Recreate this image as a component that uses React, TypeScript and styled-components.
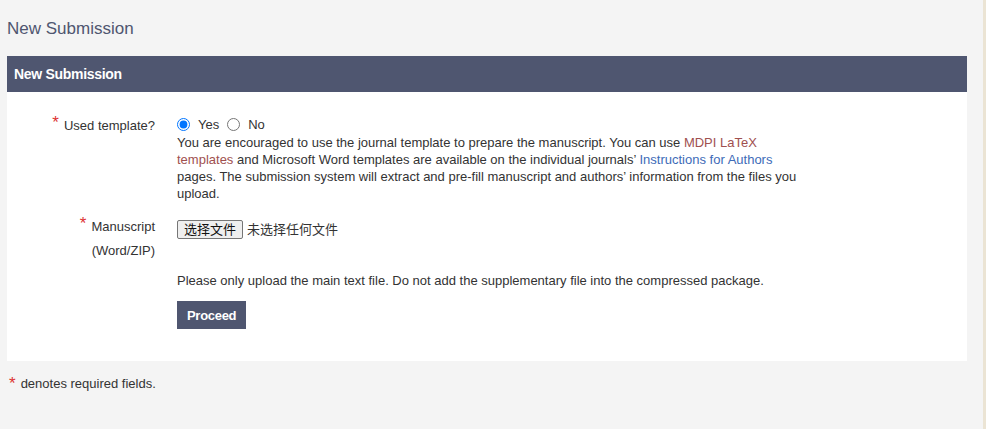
import React from "react";
import styled, { createGlobalStyle } from "styled-components";

const GlobalStyle = createGlobalStyle`
  html, body {
    margin: 0;
    padding: 0;
    background: #f4f4f4;
  }
  body {
    font-family: Arial, "Liberation Sans", "Noto Sans CJK SC", sans-serif;
    color: #222;
    border-right: 3px solid #ebe4d4;
    min-height: 429px;
    box-sizing: border-box;
  }
`;

const Page = styled.div`
  padding: 17px 16px 0 7px;
`;

const PageTitle = styled.h1`
  margin: 0 0 15px;
  font-size: 17px;
  font-weight: normal;
  color: #4f5670;
  line-height: 24px;
`;

const Panel = styled.section`
  background: #fff;
`;

const PanelHeader = styled.div`
  background: #4f5670;
  color: #fff;
  font-size: 14px;
  font-weight: bold;
  height: 36px;
  line-height: 36px;
  padding: 0 7px;
  letter-spacing: -0.3px;
`;

const PanelBody = styled.div`
  padding: 22px 0 32px;
  display: grid;
  grid-template-columns: 148px 625px;
  column-gap: 22px;
  row-gap: 13px;
`;

const Label = styled.div`
  text-align: right;
  font-size: 13px;
  line-height: 24px;
  color: #333;
`;

const Star = styled.span`
  color: #d33;
  font-size: 17px;
  vertical-align: top;
  margin-right: 5px;
  line-height: 18px;
`;

const Field = styled.div`
  font-size: 13px;
  line-height: 17px;
  color: #333;
`;

const RadioRow = styled.div`
  display: flex;
  align-items: center;
  font-size: 13px;
  height: 20px;
`;

const Radio = styled.input`
  margin: 0 8px 0 0;
  width: 13px;
  height: 13px;
`;

const RadioLabel = styled.label`
  display: flex;
  align-items: center;
  margin-right: 8px;
`;

const Link = styled.a<{ $tone: "red" | "blue" }>`
  color: ${(p) => (p.$tone === "red" ? "#a0504f" : "#3d6bb8")};
  text-decoration: none;
`;

const FileRow = styled.div`
  display: flex;
  align-items: center;
  gap: 4px;
  font-size: 13px;
  height: 24px;
  margin-top: 2px;
`;

const FileButton = styled.button`
  font-family: inherit;
  font-size: 13px;
  background: #efefef;
  border: 1px solid #767676;
  border-radius: 2px;
  padding: 0 6px;
  height: 19px;
  line-height: 17px;
  color: #111;
`;

const Note = styled.p`
  margin: 31px 0 12px;
  font-size: 13px;
  line-height: 17px;
  color: #333;
`;

const Proceed = styled.button`
  display: block;
  background: #4f5670;
  color: #fff;
  border: none;
  font-family: inherit;
  font-weight: bold;
  font-size: 13px;
  height: 28px;
  padding: 0 10px;
  letter-spacing: -0.3px;
`;

const Footer = styled.p`
  margin: 14px 0 0 2px;
  font-size: 13px;
  line-height: 18px;
  color: #333;
`;

export default function App() {
  return (
    <>
      <GlobalStyle />
      <Page>
        <PageTitle>New Submission</PageTitle>
        <Panel>
          <PanelHeader>New Submission</PanelHeader>
          <PanelBody>
            <Label>
              <Star>*</Star>Used template?
            </Label>
            <Field>
              <RadioRow>
                <RadioLabel>
                  <Radio type="radio" name="tpl" defaultChecked />
                  Yes
                </RadioLabel>
                <RadioLabel>
                  <Radio type="radio" name="tpl" />
                  No
                </RadioLabel>
              </RadioRow>
              You are encouraged to use the journal template to prepare the manuscript. You can use{" "}
              <Link $tone="red" href="#">MDPI LaTeX templates</Link> and Microsoft Word templates are
              available on the individual journals’{" "}
              <Link $tone="blue" href="#">Instructions for Authors</Link> pages. The submission system
              will extract and pre-fill manuscript and authors’ information from the files you upload.
            </Field>

            <Label>
              <Star>*</Star>Manuscript
              <br />
              (Word/ZIP)
            </Label>
            <Field>
              <FileRow>
                <FileButton type="button">选择文件</FileButton>
                <span>未选择任何文件</span>
              </FileRow>
              <Note>
                Please only upload the main text file. Do not add the supplementary file into the
                compressed package.
              </Note>
              <Proceed type="button">Proceed</Proceed>
            </Field>
          </PanelBody>
        </Panel>
        <Footer>
          <Star>*</Star>denotes required fields.
        </Footer>
      </Page>
    </>
  );
}
